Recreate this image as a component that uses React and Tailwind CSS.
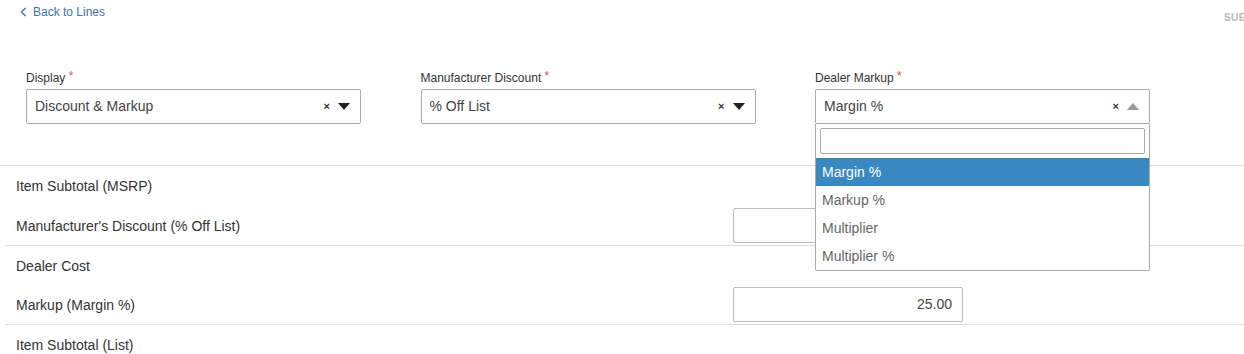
import React from "react";

const ClearX = () => <span className="text-[11px] leading-none text-[#333] font-bold mr-[8px]">×</span>;

const Caret = ({ up }) => (
  <svg width="12" height="7" viewBox="0 0 12 7">
    {up ? <path d="M0 7 L6 0 L12 7 Z" fill="#999" /> : <path d="M0 0 L12 0 L6 7 Z" fill="#222" />}
  </svg>
);

const SelectField = ({ label, value, open, options = [] }) => (
  <div className="w-[335px] relative">
    <div className="text-[12px] leading-[14px] text-[#333] mb-[4px] h-[14px]">
      {label} <span className="text-[#d9534f] relative -top-[2px]">*</span>
    </div>
    <div className="h-[35px] border border-[#aaa] rounded-[2px] bg-white flex items-center pl-[8px] pr-[10px]">
      <span className="flex-1 text-[14px] text-[#444]">{value}</span>
      <ClearX />
      <Caret up={open} />
    </div>
    {open && (
      <div className="absolute left-0 top-[53px] w-full bg-white border border-[#aaa] border-t-0 rounded-b-[2px] z-10">
        <div className="p-[4px]">
          <div className="h-[26px] border border-[#aaa] rounded-[2px]" />
        </div>
        {options.map((o, i) => (
          <div
            key={o}
            className={
              "h-[28px] flex items-center pl-[6px] text-[14px] " +
              (i === 0 ? "bg-[#3a88c2] text-white" : "text-[#666]")
            }
          >
            {o}
          </div>
        ))}
      </div>
    )}
  </div>
);

const NumInput = ({ value }) => (
  <div className="w-[230px] h-[35px] border border-[#bbb] rounded-[2px] bg-white flex items-center justify-end pr-[10px] text-[14px] text-[#444]">
    {value}
  </div>
);

const Row = ({ label, input, indent, tall }) => (
  <div className={(tall ? "h-[40px] " : "h-[39px] ") + "flex items-center " + (indent ? "pl-[11px]" : "pl-[16px]")}>
    <div className="w-[717px] text-[14px] text-[#333] pt-[1px]">{label}</div>
    {input}
  </div>
);

export default function App() {
  return (
    <div className="w-[1244px] h-[354px] overflow-hidden bg-white font-['Liberation_Sans',Arial,sans-serif]">
      <div className="flex justify-between items-start pt-[4px]">
        <a className="flex items-center gap-[6px] pl-[20px] text-[12px] leading-[16px] text-[#3d72a8]">
          <svg width="7" height="10" viewBox="0 0 7 10">
            <path d="M5.5 1 L1.5 5 L5.5 9" fill="none" stroke="#3d72a8" strokeWidth="1.4" />
          </svg>
          Back to Lines
        </a>
        <span className="mt-[6px] text-[10px] font-bold text-[#bbb] tracking-[0.5px] mr-[-2px]">SUE</span>
      </div>

      <div className="flex gap-[59.5px] pl-[26px] mt-[46px] h-[94px]">
        <SelectField label="Display" value="Discount & Markup" />
        <SelectField label="Manufacturer Discount" value="% Off List" />
        <SelectField
          label="Dealer Markup"
          value="Margin %"
          open
          options={["Margin %", "Markup %", "Multiplier", "Multiplier %"]}
        />
      </div>

      <div className="border-t border-[#ddd]">
        <Row tall label="Item Subtotal (MSRP)" />
        <Row label="Manufacturer's Discount (% Off List)" input={<NumInput value="" />} />
      </div>
      <div className="ml-[5px] border-t border-[#ddd]">
        <Row indent label="Dealer Cost" />
        <Row indent label="Markup (Margin %)" input={<NumInput value="25.00" />} />
      </div>
      <div className="ml-[5px] border-t border-[#ddd]">
        <Row indent label="Item Subtotal (List)" />
      </div>
    </div>
  );
}
